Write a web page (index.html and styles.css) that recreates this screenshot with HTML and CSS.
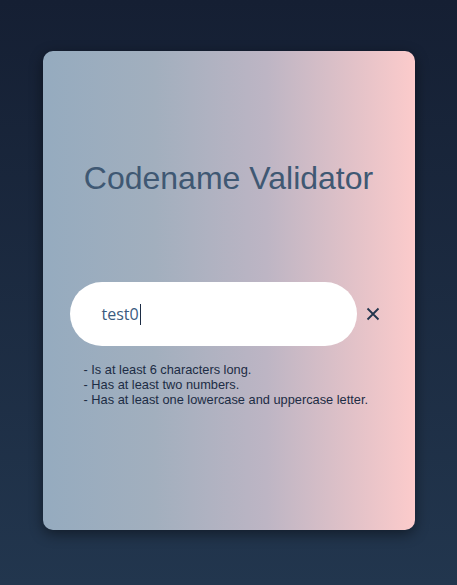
FILE: index.html
```html
<!DOCTYPE html>
<html lang="en">
<head>
<meta charset="utf-8">
<title>Codename Validator</title>
<link rel="stylesheet" href="styles.css">
</head>
<body>
<main class="card">
  <h1 class="title">Codename Validator</h1>
  <div class="field-row">
    <div class="field" role="textbox" aria-label="Codename"><span class="value">test0</span><span class="caret"></span></div>
    <button class="clear" aria-label="Clear">
      <svg width="14" height="14" viewBox="0 0 14 14"><path d="M1.5 1.5 L12.5 12.5 M12.5 1.5 L1.5 12.5" stroke="#22354d" stroke-width="1.8" fill="none"/></svg>
    </button>
  </div>
  <ul class="rules">
    <li>- Is at least 6 characters long.</li>
    <li>- Has at least two numbers.</li>
    <li>- Has at least one lowercase and uppercase letter.</li>
  </ul>
</main>
</body>
</html>
```
FILE: styles.css
```css
html, body {
  margin: 0;
  padding: 0;
  height: 100%;
}
body {
  background: linear-gradient(180deg, #151f33 0%, #22364e 100%);
  font-family: "Liberation Sans", Arial, sans-serif;
  display: flex;
  justify-content: center;
  padding-top: 51px;
  box-sizing: border-box;
}
.card {
  width: 372px;
  height: 479px;
  box-sizing: border-box;
  border-radius: 10px;
  background: linear-gradient(90deg, #95abbf 0%, #a2afbe 30%, #bdb5c4 60%, #fccbcb 100%);
  box-shadow: 0 4px 14px rgba(0, 0, 0, 0.45);
  padding: 107px 27px 0 27px;
  display: flex;
  flex-direction: column;
}
.title {
  margin: 0;
  text-align: center;
  font-weight: normal;
  font-size: 32px;
  line-height: 40px;
  color: #3f5873;
}
.field-row {
  display: flex;
  align-items: center;
  margin-top: 84px;
}
.field {
  width: 287px;
  height: 64px;
  background: #fff;
  border-radius: 32px;
  box-sizing: border-box;
  padding-left: 32px;
  display: flex;
  align-items: center;
  font-family: "Open Sans", sans-serif;
  font-size: 16px;
  color: #3a5b80;
}
.caret {
  display: inline-block;
  width: 1px;
  height: 21px;
  background: #1c2c44;
  margin-left: 1px;
}
.clear {
  border: 0;
  background: none;
  padding: 0;
  margin-left: 9px;
  width: 14px;
  height: 14px;
  display: flex;
}
.rules {
  list-style: none;
  margin: 16px 0 0 0;
  padding: 0 0 0 14px;
  font-size: 12.8px;
  line-height: 15px;
  color: #1c2c44;
}
```
